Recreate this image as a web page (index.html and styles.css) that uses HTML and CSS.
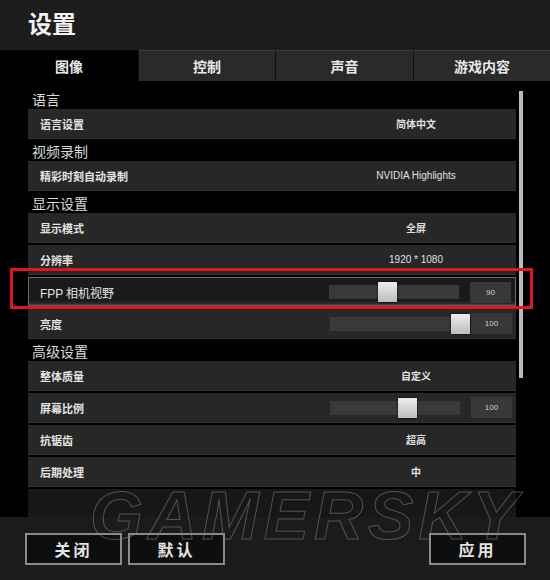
FILE: index.html
```html
<!DOCTYPE html>
<html lang="zh-CN">
<head>
    <meta charset="UTF-8">
    <title>设置</title>
    <link rel="stylesheet" href="styles.css">
</head>
<body>
    <div class="header">设置</div>

    <div class="tabs">
        <div class="tab active">图像</div>
        <div class="tab">控制</div>
        <div class="tab">声音</div>
        <div class="tab">游戏内容</div>
    </div>

    <div class="content">
        <div class="section first">语言</div>
        <div class="row">
            <span class="label">语言设置</span>
            <span class="value">简体中文</span>
        </div>

        <div class="section">视频录制</div>
        <div class="row">
            <span class="label">精彩时刻自动录制</span>
            <span class="value latin">NVIDIA Highlights</span>
        </div>

        <div class="section">显示设置</div>
        <div class="row">
            <span class="label">显示模式</span>
            <span class="value">全屏</span>
        </div>
        <div class="row">
            <span class="label">分辨率</span>
            <span class="value latin">1920 * 1080</span>
        </div>
        <div class="row selected">
            <span class="label"><span class="latin">FPP</span> 相机视野</span>
            <div class="slider">
                <div class="track"><div class="thumb" style="left: 49px"></div></div>
                <div class="num">90</div>
            </div>
        </div>
        <div class="row">
            <span class="label">亮度</span>
            <div class="slider">
                <div class="track"><div class="thumb" style="left: 121px"></div></div>
                <div class="num">100</div>
            </div>
        </div>

        <div class="section">高级设置</div>
        <div class="row">
            <span class="label">整体质量</span>
            <span class="value">自定义</span>
        </div>
        <div class="row">
            <span class="label">屏幕比例</span>
            <div class="slider">
                <div class="track"><div class="thumb" style="left: 68px"></div></div>
                <div class="num">100</div>
            </div>
        </div>
        <div class="row">
            <span class="label">抗锯齿</span>
            <span class="value">超高</span>
        </div>
        <div class="row">
            <span class="label">后期处理</span>
            <span class="value">中</span>
        </div>
        <div class="row faded"></div>

        <div class="scrollbar"></div>
        <div class="highlight"></div>
    </div>

    <div class="footer">
        <div class="left-buttons">
            <button>关闭</button>
            <button>默认</button>
        </div>
        <button>应用</button>
    </div>

    <div class="watermark">GAMERSKY</div>
</body>
</html>
```

FILE: styles.css
```css
body {
    margin: 0;
    width: 550px;
    height: 580px;
    overflow: hidden;
    position: relative;
    background-color: #000;
    color: #e6e6e6;
    font-family: "Noto Sans CJK SC", "Liberation Sans", sans-serif;
}
.latin {
    font-family: "Liberation Sans", "Noto Sans CJK SC", sans-serif;
}
.header {
    height: 50px;
    line-height: 46px;
    padding-left: 28px;
    background-color: #1d1d1d;
    font-size: 24px;
    font-weight: bold;
    color: #f2f2f2;
}
.tabs {
    display: grid;
    grid-template-columns: 138px 137px 138px 137px;
    height: 31px;
    background-color: #1d1d1d;
}
.tab {
    display: flex;
    align-items: center;
    justify-content: center;
    background-color: #2a2a2a;
    border-top: 1px solid #3a3a3a;
    border-left: 1px solid #111;
    box-sizing: border-box;
    font-size: 14px;
    font-weight: bold;
    color: #e8e8e8;
}
.tab.active {
    background-color: #000;
    border: none;
}
.content {
    position: relative;
    height: 436px;
    padding: 0 34px 0 28px;
    overflow: hidden;
}
.section {
    height: 20px;
    line-height: 20px;
    padding-left: 4px;
    font-size: 14px;
    color: #dcdcdc;
}
.section.first {
    padding-top: 8px;
}
.row {
    display: flex;
    align-items: center;
    height: 30px;
    margin-bottom: 2px;
    background-color: #272727;
    border-bottom: 1px solid #333;
    box-sizing: border-box;
}
.row .label {
    flex: 1;
    padding-left: 12px;
    font-size: 11px;
    font-weight: bold;
    color: #e4e4e4;
}
.row .value {
    width: 200px;
    text-align: center;
    font-size: 10px;
    font-weight: bold;
    color: #e0e0e0;
}
.row .value.latin {
    font-weight: normal;
}
.row.selected {
    background: linear-gradient(to bottom, #1a1a1a 80%, #2c2c2c 92%, #6a6a6a);
    border: 1px solid #6c6c6c;
}
.row.selected .label {
    font-size: 12px;
    font-weight: normal;
    padding-left: 11px;
}
.row.faded {
    height: 29px;
    background-color: #171717;
    border-bottom: none;
}
.slider {
    display: flex;
    align-items: center;
    gap: 11px;
    width: 182px;
    padding-right: 4px;
}
.track {
    position: relative;
    width: 130px;
    height: 14px;
    background-color: #3a3a3a;
}
.thumb {
    position: absolute;
    top: -3px;
    width: 19px;
    height: 20px;
    background: linear-gradient(to bottom, #ececec, #bdbdbd);
    box-shadow: 0 0 2px #000;
}
.num {
    width: 41px;
    height: 21px;
    line-height: 21px;
    background-color: #383838;
    text-align: center;
    font-family: "Liberation Sans", sans-serif;
    font-size: 8px;
    color: #cfcfcf;
}
.scrollbar {
    position: absolute;
    left: 519px;
    top: 10px;
    width: 4px;
    height: 287px;
    background-color: #b9b9b9;
}
.highlight {
    position: absolute;
    left: 10px;
    top: 187px;
    width: 517px;
    height: 35px;
    border: 3px solid #e3141b;
}
.footer {
    display: flex;
    justify-content: space-between;
    align-items: center;
    height: 63px;
    padding: 0 24px 0 25px;
    background-color: #1b1b1b;
}
.left-buttons {
    display: flex;
    gap: 6px;
}
button {
    width: 97px;
    height: 32px;
    background-color: #0e0e0e;
    border: 2px solid #8a8a8a;
    color: #e4e4e4;
    font-family: "Noto Sans CJK SC", sans-serif;
    font-size: 16px;
    font-weight: bold;
    letter-spacing: 3px;
}
.watermark {
    position: absolute;
    left: 90px;
    top: 476px;
    font-family: "Liberation Sans", sans-serif;
    font-size: 68px;
    font-weight: bold;
    font-style: italic;
    letter-spacing: 5px;
    color: transparent;
    -webkit-text-stroke: 1px rgba(130, 130, 130, 0.55);
    pointer-events: none;
}
```
